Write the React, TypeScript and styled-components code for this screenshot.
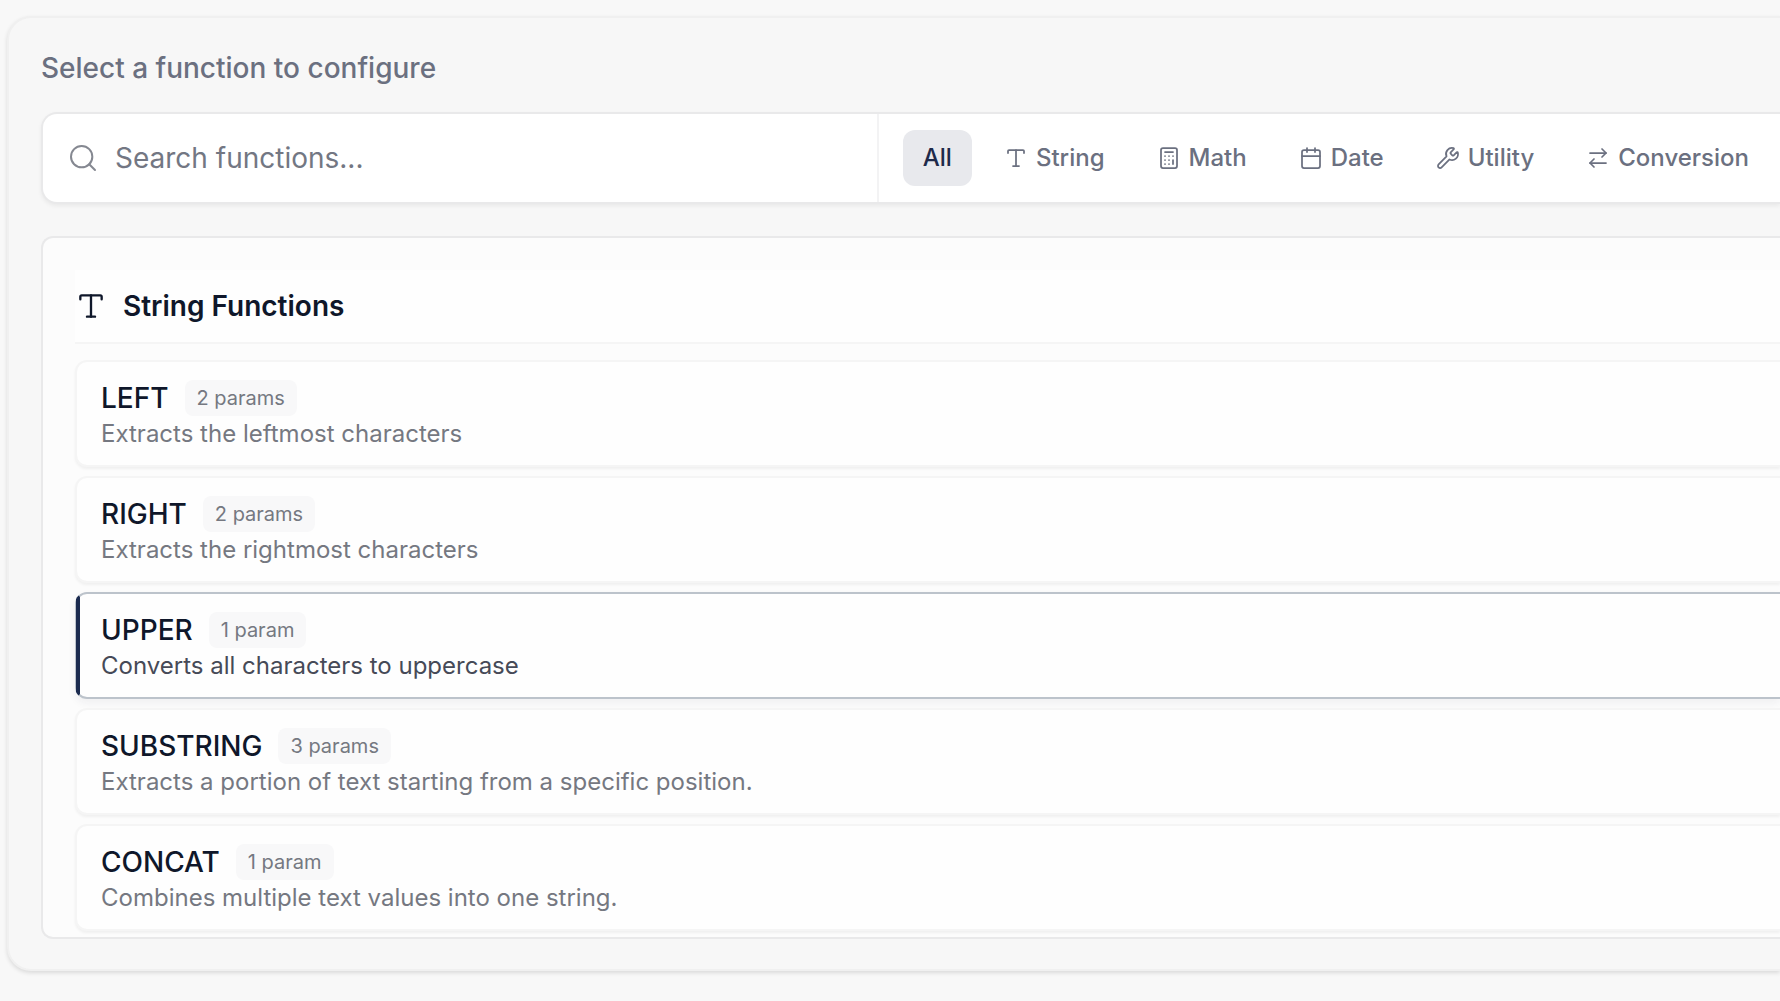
import { useState } from "react";
import styled, { createGlobalStyle, css } from "styled-components";
import {
  ArrowRightLeft,
  Calculator,
  Calendar,
  Search,
  Type,
  Wrench,
  type LucideIcon,
} from "lucide-react";

const GlobalStyle = createGlobalStyle`
  *, *::before, *::after { box-sizing: border-box; }
  body {
    margin: 0;
    background: #f8f8f8;
    color: #0f172a;
    font-family: Inter, "Liberation Sans", sans-serif;
    -webkit-font-smoothing: antialiased;
    overflow-x: hidden;
  }
  button, input { font: inherit; color: inherit; }
`;

const Page = styled.main`
  padding: 16px 0 28px 7px;
`;

const Panel = styled.section`
  display: flex;
  flex-direction: column;
  padding: 32px 0 30px 32px;
  background: #f7f7f7;
  border: 2px solid #f0f0f0;
  border-right: 0;
  border-radius: 24px 0 0 24px;
  box-shadow: 0 2px 4px rgba(0, 0, 0, 0.12);
`;

const Heading = styled.h1`
  margin: 0 0 26px;
  color: #6b7080;
  font-size: 28px;
  font-weight: 500;
  line-height: 36px;
`;

const Toolbar = styled.div`
  display: flex;
  margin-bottom: 32px;
  background: #fff;
  border: 2px solid #e9e9ea;
  border-right: 0;
  border-radius: 16px 0 0 16px;
  box-shadow: 0 2px 4px rgba(0, 0, 0, 0.06);
`;

const SearchField = styled.label`
  display: flex;
  flex: 1;
  align-items: center;
  gap: 16px;
  min-width: 0;
  padding-left: 24px;
  color: #858891;
`;

const SearchInput = styled.input`
  flex: 1;
  min-width: 0;
  padding: 0;
  border: 0;
  outline: 0;
  background: transparent;
  color: #0f172a;
  font-size: 28px;
  line-height: 36px;

  &::placeholder {
    color: #737783;
    opacity: 1;
  }
`;

const Tabs = styled.nav`
  display: flex;
  gap: 12px;
  padding: 16px 11px 16px 24px;
  border-left: 2px solid #f3f3f4;
`;

const Tab = styled.button<{ $active: boolean }>`
  display: flex;
  align-items: center;
  gap: 8px;
  height: 56px;
  padding: 0 20px;
  border: 0;
  border-radius: 12px;
  background: ${(p) => (p.$active ? "#e8e9ed" : "transparent")};
  color: ${(p) => (p.$active ? "#1e2a4a" : "#6b7080")};
  font-size: 24px;
  font-weight: 500;
  line-height: 32px;
  white-space: nowrap;
  cursor: pointer;
`;

const Results = styled.div`
  padding: 32px 0 6px 32px;
  background: #fcfcfc;
  border: 2px solid #e9e9ea;
  border-right: 0;
  border-radius: 12px 0 0 12px;
`;

const GroupHeader = styled.header`
  display: flex;
  align-items: center;
  gap: 16px;
  height: 74px;
  margin-bottom: 16px;
  background: #fefefe;
  border-bottom: 2px solid #f5f5f5;
`;

const GroupTitle = styled.h2`
  margin: 0;
  font-size: 28px;
  font-weight: 600;
  line-height: 36px;
`;

const FunctionList = styled.div`
  display: flex;
  flex-direction: column;
  gap: 9px;
`;

const Badge = styled.span`
  padding: 4px 12px;
  border-radius: 8px;
  background: #f8f8f9;
  color: #757881;
  font-size: 20px;
  font-weight: 400;
  line-height: 28px;
`;

const Description = styled.span`
  color: #757881;
  font-size: 24px;
  line-height: 36px;
`;

const selectedRow = css`
  border-color: #bcc3cb;
  border-left-color: transparent;
  background: linear-gradient(to right, #bcc3cb 1px, #1b2b4f 1px 5px, #fefefe 5px) border-box;
  box-shadow: 0 4px 8px rgba(30, 42, 74, 0.06);

  ${Description} {
    color: #464a57;
  }
`;

const FunctionRow = styled.button<{ $selected: boolean }>`
  display: flex;
  flex-direction: column;
  align-items: flex-start;
  padding: 18px 0 13px 24px;
  border: 2px solid #f5f5f5;
  border-right: 0;
  border-radius: 12px 0 0 12px;
  background: #fefefe;
  box-shadow: 0 2px 3px rgba(0, 0, 0, 0.05);
  text-align: left;
  cursor: pointer;
  ${(p) => p.$selected && selectedRow}
`;

const NameLine = styled.span`
  display: flex;
  align-items: center;
  gap: 16px;
  font-size: 28px;
  font-weight: 500;
  line-height: 36px;
`;

const categories: { label: string; icon?: LucideIcon }[] = [
  { label: "All" },
  { label: "String", icon: Type },
  { label: "Math", icon: Calculator },
  { label: "Date", icon: Calendar },
  { label: "Utility", icon: Wrench },
  { label: "Conversion", icon: ArrowRightLeft },
];

const functions = [
  { name: "LEFT", params: 2, text: "Extracts the leftmost characters" },
  { name: "RIGHT", params: 2, text: "Extracts the rightmost characters" },
  { name: "UPPER", params: 1, text: "Converts all characters to uppercase" },
  { name: "SUBSTRING", params: 3, text: "Extracts a portion of text starting from a specific position." },
  { name: "CONCAT", params: 1, text: "Combines multiple text values into one string." },
];

export default function App() {
  const [category, setCategory] = useState("All");
  const [selected, setSelected] = useState("UPPER");
  const [query, setQuery] = useState("");

  const visible = functions.filter((fn) =>
    fn.name.toLowerCase().includes(query.trim().toLowerCase())
  );

  return (
    <>
      <GlobalStyle />
      <Page>
        <Panel>
          <Heading>Select a function to configure</Heading>
          <Toolbar>
            <SearchField>
              <Search size={32} strokeWidth={1.5} aria-hidden />
              <SearchInput
                type="text"
                aria-label="Search functions"
                placeholder="Search functions..."
                value={query}
                onChange={(e) => setQuery(e.target.value)}
              />
            </SearchField>
            <Tabs aria-label="Function categories">
              {categories.map(({ label, icon: Icon }) => (
                <Tab
                  key={label}
                  type="button"
                  $active={category === label}
                  aria-pressed={category === label}
                  onClick={() => setCategory(label)}
                >
                  {Icon && <Icon size={24} strokeWidth={1.75} aria-hidden />}
                  {label}
                </Tab>
              ))}
            </Tabs>
          </Toolbar>
          <Results>
            <GroupHeader>
              <Type size={32} strokeWidth={1.75} aria-hidden />
              <GroupTitle>String Functions</GroupTitle>
            </GroupHeader>
            <FunctionList>
              {visible.map((fn) => (
                <FunctionRow
                  key={fn.name}
                  type="button"
                  $selected={selected === fn.name}
                  aria-pressed={selected === fn.name}
                  onClick={() => setSelected(fn.name)}
                >
                  <NameLine>
                    {fn.name}
                    <Badge>{`${fn.params} ${fn.params === 1 ? "param" : "params"}`}</Badge>
                  </NameLine>
                  <Description>{fn.text}</Description>
                </FunctionRow>
              ))}
            </FunctionList>
          </Results>
        </Panel>
      </Page>
    </>
  );
}
